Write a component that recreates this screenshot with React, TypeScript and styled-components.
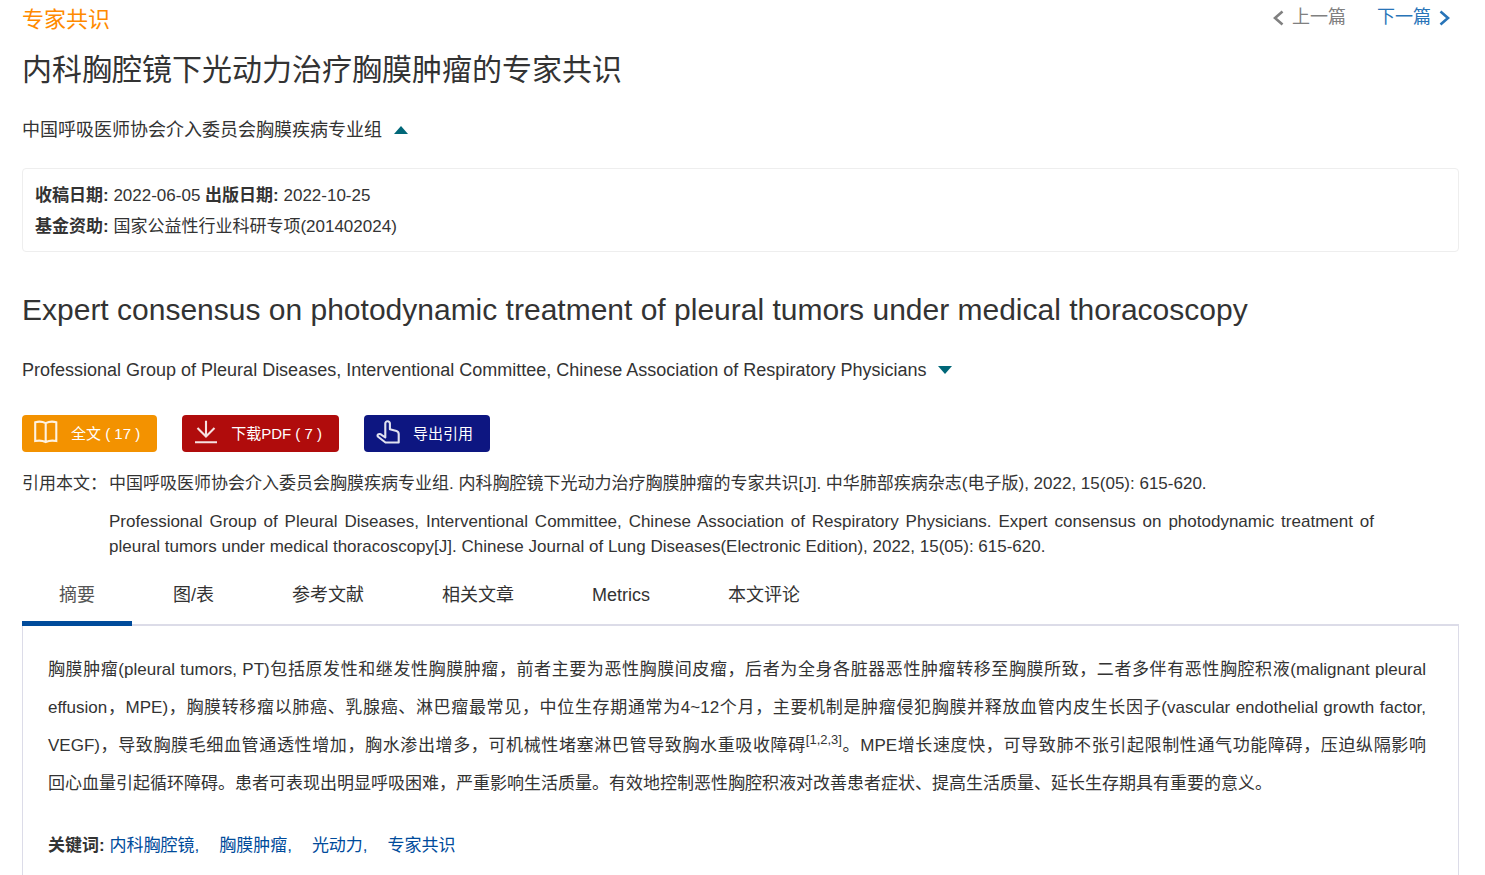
import React from "react";
import styled, { createGlobalStyle } from "styled-components";

const GlobalStyle = createGlobalStyle`
  * { box-sizing: border-box; }
  body {
    margin: 0;
    background: #fff;
    color: #333;
    font-family: "Liberation Sans", "Noto Sans CJK SC", sans-serif;
    font-size: 18px;
    line-height: 25px;
  }
`;

const Page = styled.main`
  display: flex;
  flex-direction: column;
  min-height: 100vh;
  padding: 4px 26px 0 22px;
`;

const TopBar = styled.header`
  display: flex;
  justify-content: space-between;
  align-items: flex-start;
`;

const Category = styled.a`
  color: #ff8a00;
  font-size: 22px;
  line-height: 32px;
  text-decoration: none;
`;

const Pager = styled.nav`
  display: flex;
  gap: 31px;
  padding: 1px 8px 0 0;
`;

const PagerLink = styled.a<{ $muted?: boolean }>`
  display: flex;
  align-items: center;
  gap: 8px;
  color: ${(p) => (p.$muted ? "#808080" : "#2874b8")};
  text-decoration: none;
`;

const Title = styled.h1`
  margin: 13px 0 0;
  font-size: 30px;
  font-weight: 400;
  line-height: 42px;
`;

const EnglishTitle = styled(Title)`
  margin-top: 37px;
`;

const Authors = styled.div`
  display: flex;
  align-items: center;
  gap: 12px;
  margin-top: 27px;
`;

const Toggle = styled.button`
  display: flex;
  padding: 4px 0 6px;
  border: 0;
  background: none;
  cursor: pointer;
`;

const MetaBox = styled.section`
  margin-top: 25px;
  padding: 11px 12px 9px;
  border: 1px solid #eee;
  border-radius: 4px;
  font-size: 17px;
  line-height: 31px;
`;

const MetaLine = styled.p`
  margin: 0;
`;

const Actions = styled.div`
  display: flex;
  gap: 25px;
  margin-top: 32px;
`;

const ActionButton = styled.button<{ $color: string }>`
  display: flex;
  align-items: center;
  gap: 13px;
  height: 37px;
  padding: 0 17px 0 12px;
  border: 0;
  border-radius: 4px;
  background: ${(p) => p.$color};
  color: #fff;
  font-family: inherit;
  font-size: 15px;
  line-height: 20px;
  cursor: pointer;

  svg { margin-bottom: 4px; }
`;

const Citation = styled.section`
  display: grid;
  grid-template-columns: 87px 1fr;
  row-gap: 13px;
  margin-top: 19px;
  padding-right: 85px;
  font-size: 17px;
`;

const CiteText = styled.p`
  grid-column: 2;
  margin: 0;
  text-align: justify;
`;

const Tabs = styled.div`
  display: flex;
  gap: 4px;
  margin-top: 12px;
  border-bottom: 2px solid #dcdce8;
`;

const Tab = styled.button<{ $active?: boolean }>`
  height: 55px;
  margin-bottom: -2px;
  padding: 0 37px 1px;
  border: 0;
  border-bottom: 5px solid ${(p) => (p.$active ? "#004b9b" : "transparent")};
  background: none;
  color: ${(p) => (p.$active ? "#555" : "#333")};
  font-family: inherit;
  font-size: 18px;
  line-height: 25px;
  cursor: pointer;
`;

const Panel = styled.section`
  flex: 1;
  padding: 25px 32px 17px 25px;
  border: solid #dcdce8;
  border-width: 0 1px;
  font-size: 17px;
`;

const Abstract = styled.p`
  margin: 0;
  line-height: 38px;
  text-align: justify;

  sup {
    font-size: 13px;
    line-height: 0;
  }
`;

const Term = styled.span`
  white-space: nowrap;
`;

const Keywords = styled.div`
  display: flex;
  gap: 20px;
  margin-top: 30px;
`;

const Keyword = styled.a`
  color: #004b9b;
  text-decoration: none;
`;

const Chevron = ({ left }: { left?: boolean }) => (
  <svg width="12" height="16" viewBox="0 0 12 16" fill="none" stroke="currentColor" strokeWidth="2.6">
    <path d={left ? "M10.5 1.5 3 8l7.500 6.500" : "M1.500 1.500 9 8l-7.500 6.500"} />
  </svg>
);

const Triangle = ({ up }: { up?: boolean }) => (
  <svg width="14" height="8" viewBox="0 0 14 8" fill="#006778">
    <path d={up ? "M0 8 7 0l7 8z" : "M0 0h14L7 8z"} />
  </svg>
);

const iconProps = {
  width: 24,
  height: 24,
  viewBox: "0 0 24 24",
  fill: "none",
  stroke: "#fff",
  strokeOpacity: 0.88,
  strokeWidth: 2.1,
};

const BookIcon = () => (
  <svg {...iconProps}>
    <path d="M1.200 2.200Q7 .6 11.700 3.200 16.500.6 22.300 2.200V21Q16.500 19.800 11.700 22 7 19.800 1.200 21ZM11.700 3.200V22" />
  </svg>
);

const DownloadIcon = () => (
  <svg {...iconProps}>
    <path d="M12 .8V16M3.500 8 12 16.500 20.500 8M1 22.300h22" />
  </svg>
);

const PointIcon = () => (
  <svg {...iconProps} strokeLinejoin="round">
    <path d="M9.300 15.800V3.600a2.300 2.300 0 0 1 4.600 0V9.200L20.500 11Q22.700 11.800 22.700 14V22.500H9.500L1.800 16.500Q1 14.800 2.600 14.200 4.200 13.600 5.500 14.800L9.300 17.500Z" />
  </svg>
);

const tabs = ["摘要", "图/表", "参考文献", "相关文章", "Metrics", "本文评论"];
const keywords = ["胸膜肿瘤,", "光动力,", "专家共识"];

export default function App() {
  return (
    <>
      <GlobalStyle />
      <Page>
        <TopBar>
          <Category href="#category">专家共识</Category>
          <Pager>
            <PagerLink href="#prev" $muted><Chevron left />上一篇</PagerLink>
            <PagerLink href="#next">下一篇<Chevron /></PagerLink>
          </Pager>
        </TopBar>
        <Title>内科胸腔镜下光动力治疗胸膜肿瘤的专家共识</Title>
        <Authors>
          中国呼吸医师协会介入委员会胸膜疾病专业组
          <Toggle aria-label="收起作者信息"><Triangle up /></Toggle>
        </Authors>
        <MetaBox>
          <MetaLine>
            <strong>收稿日期:</strong> 2022-06-05 <strong>出版日期:</strong> 2022-10-25
          </MetaLine>
          <MetaLine>
            <strong>基金资助:</strong> 国家公益性行业科研专项(201402024)
          </MetaLine>
        </MetaBox>
        <EnglishTitle as="h2">
          Expert consensus on photodynamic treatment of pleural tumors under medical thoracoscopy
        </EnglishTitle>
        <Authors>
          Professional Group of Pleural Diseases, Interventional Committee, Chinese Association of Respiratory Physicians
          <Toggle aria-label="展开作者信息"><Triangle /></Toggle>
        </Authors>
        <Actions>
          <ActionButton $color="#f39200"><BookIcon />全文 ( 17 )</ActionButton>
          <ActionButton $color="#b00c0c"><DownloadIcon />下载PDF ( 7 )</ActionButton>
          <ActionButton $color="#0d1681"><PointIcon />导出引用</ActionButton>
        </Actions>
        <Citation>
          <span>引用本文：</span>
          <CiteText>
            中国呼吸医师协会介入委员会胸膜疾病专业组. 内科胸腔镜下光动力治疗胸膜肿瘤的专家共识[J]. 中华肺部疾病杂志(电子版), 2022, 15(05): 615-620.
          </CiteText>
          <CiteText>
            Professional Group of Pleural Diseases, Interventional Committee, Chinese Association of Respiratory Physicians. Expert consensus on photodynamic treatment of pleural tumors under medical thoracoscopy[J]. Chinese Journal of Lung Diseases(Electronic Edition), 2022, 15(05): 615-620.
          </CiteText>
        </Citation>
        <Tabs role="tablist">
          {tabs.map((name, i) => (
            <Tab key={name} role="tab" aria-selected={i === 0} $active={i === 0}>{name}</Tab>
          ))}
        </Tabs>
        <Panel role="tabpanel">
          <Abstract>
            胸膜肿瘤(pleural tumors, PT)包括原发性和继发性胸膜肿瘤，前者主要为恶性胸膜间皮瘤，后者为全身各脏器恶性肿瘤转移至胸膜所致，二者多伴有恶性胸腔积液(malignant pleural effusion，MPE)，胸膜转移瘤以肺癌、乳腺癌、淋巴瘤最常见，中位生存期通常为4~12个月，主要机制是肿瘤侵犯胸膜并释放血管内皮生长因子(vascular endothelial growth factor, VEGF)，导致胸膜毛细血管通透性增加，胸水渗出增多，可机械性堵塞淋巴管导致胸水重吸收障碍<sup>[1,2,3]</sup>。MPE增长速度快，可导致肺不张引起限制性通气功能障碍，压迫纵隔影响<Term>回心血量</Term>引起循环障碍。患者可表现出明显呼吸困难，严重影响生活质量。有效地控制恶性胸腔积液对改善患者症状、提高生活质量、延长生存期具有重要的意义。
          </Abstract>
          <Keywords>
            <span>
              <strong>关键词:</strong> <Keyword href="#keyword">内科胸腔镜,</Keyword>
            </span>
            {keywords.map((word) => (
              <Keyword key={word} href="#keyword">{word}</Keyword>
            ))}
          </Keywords>
        </Panel>
      </Page>
    </>
  );
}
